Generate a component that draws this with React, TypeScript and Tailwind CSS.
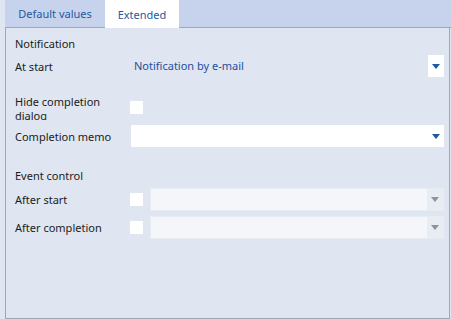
import React from 'react';

const Caret = ({ color }: { color: string }) => (
  <svg width="8" height="5" viewBox="0 0 8 5">
    <path d="M0 0 H8 L4 5 Z" fill={color} />
  </svg>
);

const Checkbox = () => <div className="w-[13px] h-[13px] bg-white shrink-0" />;

const DisabledCombo = () => (
  <div className="flex-1 ml-[7px] h-[23px] flex bg-[#f4f6fa] border border-[#e7ebf2]">
    <div className="flex-1" />
    <div className="w-[16px] h-full bg-[#e8ecf3] flex items-center justify-center">
      <Caret color="#8e939c" />
    </div>
  </div>
);

export default function App() {
  return (
    <div
      className="w-[451px] h-[319px] bg-[#dfe6f1] flex flex-col text-[11px] text-[#1b1b1b]"
      style={{ fontFamily: "'Segoe UI', 'Noto Sans', sans-serif" }}
    >
      {/* Tab strip */}
      <div className="h-[28px] flex shrink-0">
        <div className="w-[5px] bg-[#dfe6f1]" />
        <div className="w-[100px] bg-[#c7d3ec] border-b border-[#a3a8b0] flex items-center justify-center pt-[2px] text-[#1f5aa0]">
          Default values
        </div>
        <div className="w-[74px] bg-white flex items-center justify-center pt-[2px] text-[#1f5aa0]">
          Extended
        </div>
        <div className="flex-1 bg-[#c7d3ec] border-b border-[#a3a8b0]" />
      </div>

      {/* Panel */}
      <div className="flex-1 ml-[5px] mr-px border-l border-r border-b border-[#a3a8b0] flex flex-col pl-[9px] pr-[5px] pt-[7px]">
        <div className="h-[16px] flex items-center pt-[2px]">Notification</div>

        <div className="mt-[4px] h-[22px] flex items-center">
          <div className="w-[115px] shrink-0 pt-[2px]">At start</div>
          <div className="flex-1 pl-[4px] pt-[1px] text-[#1e4f9c]">Notification by e-mail</div>
          <div className="w-[16px] h-[22px] bg-white flex items-center justify-center">
            <Caret color="#1e58a8" />
          </div>
        </div>

        <div className="mt-[17px] h-[26px] flex items-start">
          <div className="w-[115px] shrink-0 h-[26px] overflow-hidden leading-[14px] pt-px">
            Hide completion
            <br />
            dialog
          </div>
          <div className="mt-[7px]">
            <Checkbox />
          </div>
        </div>

        <div className="mt-[5px] h-[22px] flex items-center">
          <div className="w-[116px] shrink-0 pt-[2px]">Completion memo</div>
          <div className="flex-1 h-[22px] bg-white flex items-center justify-end pr-[4px]">
            <Caret color="#1e58a8" />
          </div>
        </div>

        <div className="mt-[20px] h-[16px] flex items-center pt-[2px]">Event control</div>

        <div className="mt-[5px] h-[23px] flex items-center">
          <div className="w-[115px] shrink-0 pt-[2px]">After start</div>
          <Checkbox />
          <DisabledCombo />
        </div>

        <div className="mt-[5px] h-[23px] flex items-center">
          <div className="w-[115px] shrink-0 pt-[2px]">After completion</div>
          <Checkbox />
          <DisabledCombo />
        </div>
      </div>
    </div>
  );
}
